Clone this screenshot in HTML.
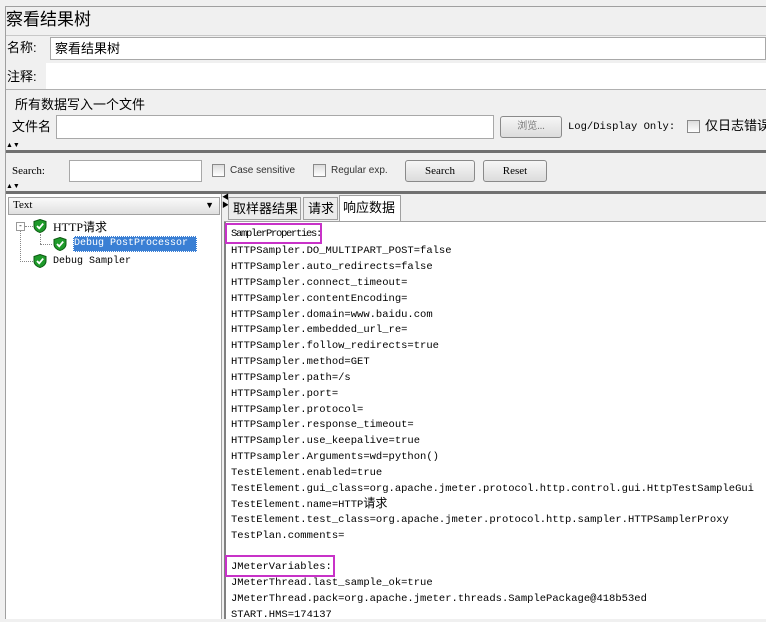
<!DOCTYPE html>
<html><head><meta charset="utf-8"><style>
*{margin:0;padding:0;box-sizing:border-box;white-space:nowrap}
body{width:766px;height:619px;overflow:hidden;background:#f0f0f0;font-family:"Liberation Sans","Noto Sans CJK SC",sans-serif;font-size:12px;color:#000;position:relative}
.a{position:absolute}
.cn{font-family:"Liberation Sans","Noto Sans CJK SC",sans-serif;line-height:1.2}
.inp{position:absolute;background:#fff;border:1px solid #a8a8a8}
.btn{position:absolute;border:1px solid #8a8a8a;border-radius:3px;background:linear-gradient(#f6f6f6,#dcdcdc);font-family:"Liberation Serif",serif;font-size:11px;text-align:center;line-height:20px}
.cb{position:absolute;width:13px;height:13px;border:1px solid #8a8a8a;background:linear-gradient(#ddd,#fff)}
.mono{font-family:"Liberation Mono","Noto Sans CJK SC",monospace;font-size:10.5px;line-height:13px}
.ln{position:absolute;left:231px;white-space:nowrap;height:13px;line-height:13px}
.shield{position:absolute;width:14px;height:14px}
</style></head><body>
<div class="a" style="left:5px;top:6px;width:761px;height:613px;border-left:1px solid #a0a0a0;border-top:1px solid #a0a0a0"></div>
<div class="a cn" style="left:6px;top:10px;font-size:17px">察看结果树</div>
<div class="a" style="left:6px;top:35px;width:760px;border-top:1px solid #c8c8c8"></div>
<div class="a cn" style="left:7px;top:40px;font-size:13px">名称:</div>
<div class="inp cn" style="left:50px;top:37px;width:716px;height:23px;font-size:13px;padding:3px 0 0 4px">察看结果树</div>
<div class="a cn" style="left:7px;top:69px;font-size:13px">注释:</div>
<div class="inp" style="left:46px;top:63px;width:720px;height:26px;border:none"></div>
<div class="a" style="left:6px;top:89px;width:760px;border-top:1px solid #b0b0b0"></div>
<div class="a cn" style="left:15px;top:97px;font-size:13px">所有数据写入一个文件</div>
<div class="a cn" style="left:12px;top:119px;font-size:13px">文件名</div>
<div class="inp" style="left:56px;top:115px;width:438px;height:24px"></div>
<div class="btn cn" style="left:500px;top:116px;width:62px;height:22px;font-size:10px;color:#777;line-height:20px">浏览...</div>
<div class="a" style="left:568px;top:121px;font-family:'Liberation Mono',monospace;font-size:10.5px">Log/Display Only:</div>
<div class="cb" style="left:687px;top:120px"></div>
<div class="a cn" style="left:705px;top:118px;font-size:13px">仅日志错误</div>
<div class="a" style="left:6px;top:142px;font-size:7px;line-height:8px">▲▼</div>
<div class="a" style="left:6px;top:150px;width:760px;height:3px;background:#707070"></div>
<div class="a" style="left:12px;top:165px;font-family:'Liberation Serif',serif;font-size:11px">Search:</div>
<div class="inp" style="left:69px;top:160px;width:133px;height:22px"></div>
<div class="cb" style="left:212px;top:164px"></div>
<div class="a" style="left:230px;top:165px;font-size:10px;color:#333">Case sensitive</div>
<div class="cb" style="left:313px;top:164px"></div>
<div class="a" style="left:331px;top:165px;font-size:10px;color:#333">Regular exp.</div>
<div class="btn" style="left:405px;top:160px;width:70px;height:22px">Search</div>
<div class="btn" style="left:483px;top:160px;width:64px;height:22px">Reset</div>
<div class="a" style="left:6px;top:183px;font-size:7px;line-height:8px">▲▼</div>
<div class="a" style="left:6px;top:191px;width:760px;height:3px;background:#707070"></div>
<!-- left tree -->
<div class="a" style="left:6px;top:194px;width:216px;height:425px;background:#fff;border-right:1px solid #a0a0a0"></div>
<div class="a" style="left:8px;top:197px;width:212px;height:18px;border:1px solid #a0a0a0;background:linear-gradient(#fafafa,#e0e0e0);font-family:'Liberation Serif',serif;font-size:11px;padding:1px 0 0 4px">Text<span style="position:absolute;right:5px;top:2px;font-size:9px">▼</span></div>
<div class="a" style="left:16px;top:222px;width:9px;height:9px;border:1px solid #999;font-size:8px;line-height:6px;text-align:center;background:#fff">-</div>
<div class="a" style="left:25px;top:226px;width:8px;border-top:1px dotted #888"></div>
<div class="a" style="left:20px;top:231px;height:31px;border-left:1px dotted #888"></div>
<div class="a" style="left:20px;top:261px;width:13px;border-top:1px dotted #888"></div>
<div class="a" style="left:40px;top:234px;height:10px;border-left:1px dotted #888"></div>
<div class="a" style="left:40px;top:244px;width:12px;border-top:1px dotted #888"></div>
<svg class="shield" style="left:33px;top:219px" viewBox="0 0 14 14"><path d="M7 0.5L13 2.5V7C13 10.5 10 12.8 7 13.5C4 12.8 1 10.5 1 7V2.5Z" fill="#1e9a2a" stroke="#0c5a12"/><path d="M4 7L6.2 9.3L10.2 4.6" stroke="#fff" stroke-width="1.8" fill="none"/></svg>
<div class="a" style="left:53px;top:220px;font-size:12px;line-height:14px;font-family:'Liberation Serif','Noto Sans CJK SC',serif">HTTP请求</div>
<svg class="shield" style="left:53px;top:237px" viewBox="0 0 14 14"><path d="M7 0.5L13 2.5V7C13 10.5 10 12.8 7 13.5C4 12.8 1 10.5 1 7V2.5Z" fill="#1e9a2a" stroke="#0c5a12"/><path d="M4 7L6.2 9.3L10.2 4.6" stroke="#fff" stroke-width="1.8" fill="none"/></svg>
<div class="a" style="left:73px;top:236px;width:124px;height:16px;background:#3a7fd4;color:#fff;font-family:'Liberation Mono',monospace;font-size:10px;line-height:15px;padding:0 0 0 1px;outline:1px dotted #fff;outline-offset:-1px">Debug PostProcessor</div>
<svg class="shield" style="left:33px;top:254px" viewBox="0 0 14 14"><path d="M7 0.5L13 2.5V7C13 10.5 10 12.8 7 13.5C4 12.8 1 10.5 1 7V2.5Z" fill="#1e9a2a" stroke="#0c5a12"/><path d="M4 7L6.2 9.3L10.2 4.6" stroke="#fff" stroke-width="1.8" fill="none"/></svg>
<div class="a" style="left:53px;top:255px;font-family:'Liberation Mono',monospace;font-size:10px;line-height:13px">Debug Sampler</div>
<!-- right panel -->
<div class="a" style="left:222px;top:194px;font-size:7px;line-height:8px">◀<br>▶</div>
<div class="a cn" style="left:228px;top:197px;width:73px;height:23px;border:1px solid #a0a0a0;background:#ececec;font-size:13px;padding:3px 0 0 4px">取样器结果</div>
<div class="a cn" style="left:303px;top:197px;width:35px;height:23px;border:1px solid #a0a0a0;background:#ececec;font-size:13px;padding:3px 0 0 4px">请求</div>
<div class="a cn" style="left:339px;top:195px;width:62px;height:27px;border:1px solid #a0a0a0;border-bottom:none;background:#fff;font-size:13px;padding:4px 0 0 3px">响应数据</div>
<div class="a" style="left:224px;top:221px;width:542px;height:398px;background:#fff;border-left:2px solid #808080;border-top:1px solid #a0a0a0"></div>
<div class="a" style="left:224px;top:221px;width:116px;height:1px;background:#a0a0a0"></div>
<div class="a" style="left:401px;top:221px;width:365px;height:1px;background:#a0a0a0"></div>
<div class="a" style="left:225px;top:223px;width:97px;height:21px;border:2px solid #c832c8"></div>
<div class="a" style="left:225px;top:555px;width:110px;height:22px;border:2px solid #c832c8"></div>
<div class="mono">
<div class="ln" style="top:228px;letter-spacing:-1.3px">SamplerProperties:</div>
<div class="ln" style="top:245px">HTTPSampler.DO_MULTIPART_POST=false</div>
<div class="ln" style="top:261px">HTTPSampler.auto_redirects=false</div>
<div class="ln" style="top:277px">HTTPSampler.connect_timeout=</div>
<div class="ln" style="top:293px">HTTPSampler.contentEncoding=</div>
<div class="ln" style="top:309px">HTTPSampler.domain=www.baidu.com</div>
<div class="ln" style="top:324px">HTTPSampler.embedded_url_re=</div>
<div class="ln" style="top:340px">HTTPSampler.follow_redirects=true</div>
<div class="ln" style="top:356px">HTTPSampler.method=GET</div>
<div class="ln" style="top:372px">HTTPSampler.path=/s</div>
<div class="ln" style="top:388px">HTTPSampler.port=</div>
<div class="ln" style="top:404px">HTTPSampler.protocol=</div>
<div class="ln" style="top:419px">HTTPSampler.response_timeout=</div>
<div class="ln" style="top:435px">HTTPSampler.use_keepalive=true</div>
<div class="ln" style="top:451px">HTTPsampler.Arguments=wd=python()</div>
<div class="ln" style="top:467px">TestElement.enabled=true</div>
<div class="ln" style="top:483px">TestElement.gui_class=org.apache.jmeter.protocol.http.control.gui.HttpTestSampleGui</div>
<div class="ln" style="top:498px">TestElement.name=HTTP<span style="font-size:12px">请求</span></div>
<div class="ln" style="top:514px">TestElement.test_class=org.apache.jmeter.protocol.http.sampler.HTTPSamplerProxy</div>
<div class="ln" style="top:530px">TestPlan.comments=</div>
<div class="ln" style="top:561px">JMeterVariables:</div>
<div class="ln" style="top:577px">JMeterThread.last_sample_ok=true</div>
<div class="ln" style="top:593px">JMeterThread.pack=org.apache.jmeter.threads.SamplePackage@418b53ed</div>
<div class="ln" style="top:609px">START.HMS=174137</div>
</div>
</body></html>
